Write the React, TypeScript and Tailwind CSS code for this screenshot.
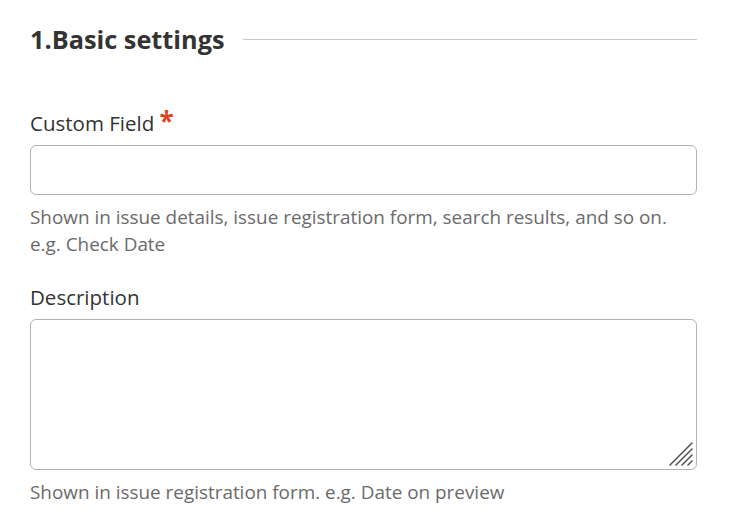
import React from 'react';

const ResizeGrip: React.FC = () => (
  <svg
    className="absolute right-[3px] bottom-[3px] pointer-events-none"
    width="26"
    height="26"
    viewBox="0 0 26 26"
  >
    <g stroke="#555" strokeWidth="1.6" strokeLinecap="round">
      <line x1="2" y1="24" x2="24" y2="2" />
      <line x1="8" y1="24" x2="24" y2="8" />
      <line x1="14" y1="24" x2="24" y2="14" />
      <line x1="20" y1="24" x2="24" y2="20" />
    </g>
  </svg>
);

const App: React.FC = () => {
  return (
    <div className="w-[732px] h-[530px] bg-white pl-[30px] pr-[35px] pt-[21px] font-['Open_Sans',sans-serif] text-[#333]">
      {/* Section header */}
      <div className="flex items-center gap-[18px]">
        <h2 className="text-[25.3px] font-bold leading-[36px] whitespace-nowrap">1.Basic settings</h2>
        <div className="flex-1 h-px bg-[#c8c8c8]" />
      </div>

      {/* Custom Field */}
      <div className="mt-[51px]">
        <label className="block text-[20.5px] leading-[26px]">
          Custom Field <span className="text-[#e0421f] font-bold text-[26px] leading-none">*</span>
        </label>
        <input
          type="text"
          className="mt-[9px] block w-full h-[50px] border border-[#b3b3b3] rounded-[6px] bg-white outline-none px-3"
        />
        <p className="mt-[9px] text-[18.9px] leading-[27px] text-[#6b6b6b]">
          Shown in issue details, issue registration form, search results, and so on.
          <br />
          e.g. Check Date
        </p>
      </div>

      {/* Description */}
      <div className="mt-[26px]">
        <label className="block text-[20.5px] leading-[26px]">Description</label>
        <div className="relative mt-[9px]">
          <textarea className="block w-full h-[151px] border border-[#b3b3b3] rounded-[6px] bg-white outline-none px-3 py-2 resize-none" />
          <ResizeGrip />
        </div>
        <p className="mt-[9px] text-[18.9px] leading-[27px] text-[#6b6b6b]">
          Shown in issue registration form. e.g. Date on preview
        </p>
      </div>
    </div>
  );
};

export default App;
